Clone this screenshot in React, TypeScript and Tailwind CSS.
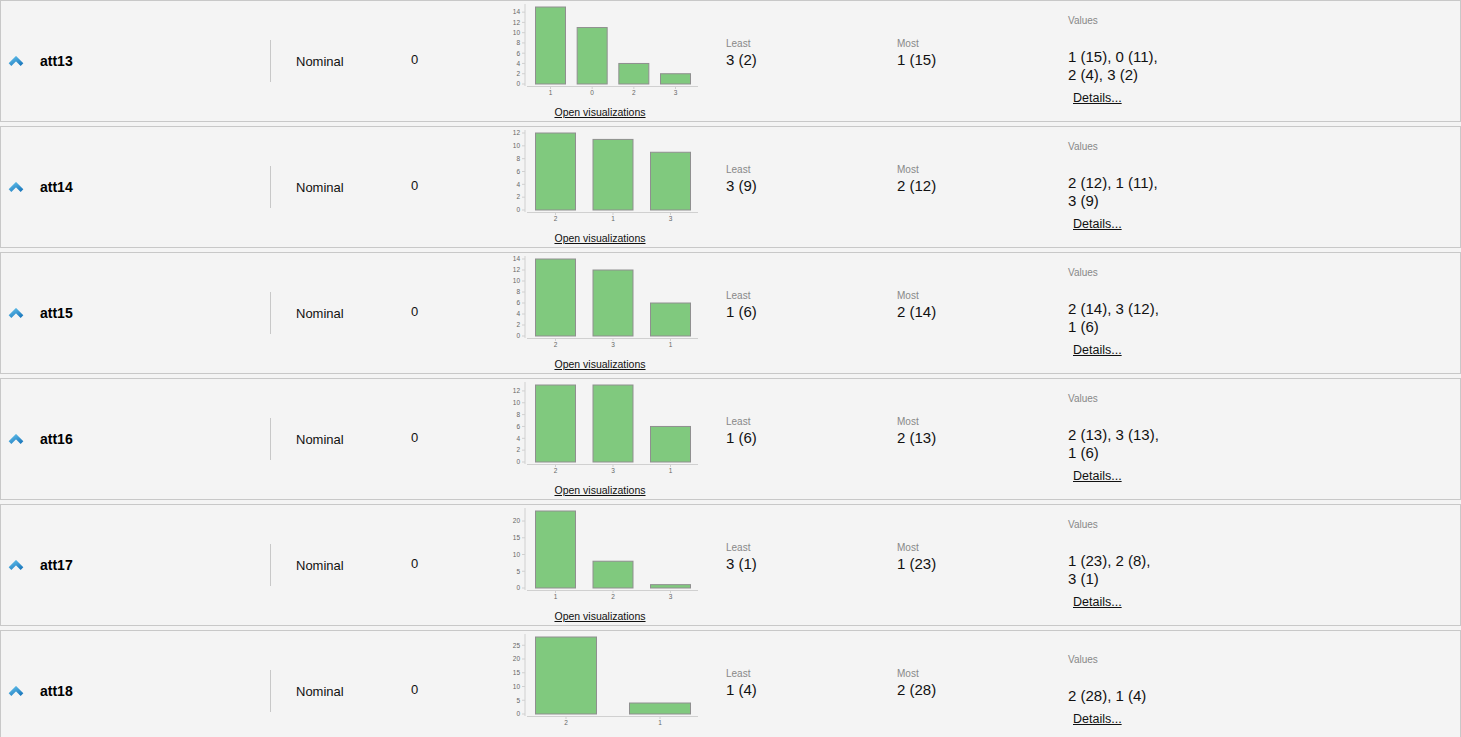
import React from 'react';

interface AttrRow {
  name: string;
  least: string;
  most: string;
  values: string[];
  bars: [string, number][];
  ticks: number[];
}

const rows: AttrRow[] = [
  { name: 'att13', least: '3 (2)', most: '1 (15)', values: ['1 (15), 0 (11),', '2 (4), 3 (2)'], bars: [['1', 15], ['0', 11], ['2', 4], ['3', 2]], ticks: [0, 2, 4, 6, 8, 10, 12, 14] },
  { name: 'att14', least: '3 (9)', most: '2 (12)', values: ['2 (12), 1 (11),', '3 (9)'], bars: [['2', 12], ['1', 11], ['3', 9]], ticks: [0, 2, 4, 6, 8, 10, 12] },
  { name: 'att15', least: '1 (6)', most: '2 (14)', values: ['2 (14), 3 (12),', '1 (6)'], bars: [['2', 14], ['3', 12], ['1', 6]], ticks: [0, 2, 4, 6, 8, 10, 12, 14] },
  { name: 'att16', least: '1 (6)', most: '2 (13)', values: ['2 (13), 3 (13),', '1 (6)'], bars: [['2', 13], ['3', 13], ['1', 6]], ticks: [0, 2, 4, 6, 8, 10, 12] },
  { name: 'att17', least: '3 (1)', most: '1 (23)', values: ['1 (23), 2 (8),', '3 (1)'], bars: [['1', 23], ['2', 8], ['3', 1]], ticks: [0, 5, 10, 15, 20] },
  { name: 'att18', least: '1 (4)', most: '2 (28)', values: ['2 (28), 1 (4)'], bars: [['2', 28], ['1', 4]], ticks: [0, 5, 10, 15, 20, 25] },
];

// bar widths as the original chart lays them out
const barWidths: Record<number, number> = { 2: 61, 3: 40, 4: 30 };

const Chevron: React.FC<{ id: string }> = ({ id }) => (
  <svg width="16" height="11" viewBox="0 0 16 11">
    <defs>
      <linearGradient id={id} x1="0" y1="0" x2="1" y2="1">
        <stop offset="0" stopColor="#5ab8e6" />
        <stop offset="1" stopColor="#1b78bd" />
      </linearGradient>
    </defs>
    <polyline points="2,8.6 8,2.6 14,8.6" fill="none" stroke={`url(#${id})`} strokeWidth="3.8" />
  </svg>
);

const BarChart: React.FC<{ bars: [string, number][]; ticks: number[] }> = ({ bars, ticks }) => {
  const max = Math.max(...bars.map(b => b[1]));
  const base = 83;
  const top = 6;
  const scale = (v: number) => base - (v * (base - top)) / max;
  const n = bars.length;
  const bw = barWidths[n] ?? 30;
  const gap = n > 1 ? (155 - n * bw) / (n - 1) : 0;
  return (
    <svg width="200" height="98" viewBox="0 0 200 98" style={{ fontFamily: '"Liberation Sans", Arial, sans-serif' }}>
      <line x1="25" y1="3" x2="25" y2="85" stroke="#d0d0d0" strokeWidth="1" />
      <line x1="27" y1="85.5" x2="198" y2="85.5" stroke="#d0d0d0" strokeWidth="1" />
      {ticks.map(t => (
        <g key={t}>
          <line x1="22" x2="25" y1={scale(t)} y2={scale(t)} stroke="#d0d0d0" />
          <text x="20" y={scale(t) + 2.3} textAnchor="end" fontSize="6.5" fill="#666">{t}</text>
        </g>
      ))}
      {bars.map(([label, v], i) => {
        const x = 35.5 + i * (bw + gap);
        const y = scale(v);
        return (
          <g key={label}>
            <rect x={x} y={y} width={bw} height={base - y} fill="#80c97e" stroke="#8f8f8f" strokeWidth="1" />
            <line x1={x + bw / 2} x2={x + bw / 2} y1="86" y2="88" stroke="#d0d0d0" />
            <text x={x + bw / 2} y="93.5" textAnchor="middle" fontSize="6.5" fill="#666">{label}</text>
          </g>
        );
      })}
    </svg>
  );
};

const Row: React.FC<{ row: AttrRow; idx: number }> = ({ row, idx }) => (
  <div className="flex h-[122px] mb-[4px] border border-[#c8c8c8] bg-[#f4f4f4] text-[#111]">
    <div className="w-[269px] flex items-center pl-[7px]">
      <Chevron id={`chev-${idx}`} />
      <span className="ml-[16px] text-[14px] font-bold text-black pt-[1px]">{row.name}</span>
    </div>
    <div className="w-px h-[42px] self-center bg-[#c8c8c8]" />
    <div className="w-[140px] flex items-center pl-[25px] text-[13px] pt-[1px]">Nominal</div>
    <div className="w-[89px] flex items-center text-[13px] pb-[3px]">0</div>
    <div className="w-[200px] flex flex-col items-center">
      <BarChart bars={row.bars} ticks={row.ticks} />
      <a href="#" className="mt-[7px] text-[10.5px] leading-[12px] underline text-[#111]">Open visualizations</a>
    </div>
    <div className="w-[197px] pl-[26px] pt-[37px] flex flex-col">
      <span className="text-[10px] leading-[12px] text-[#888]">Least</span>
      <span className="text-[15px] leading-[18px] mt-[1px]">{row.least}</span>
    </div>
    <div className="w-[171px] pt-[37px] flex flex-col">
      <span className="text-[10px] leading-[12px] text-[#888]">Most</span>
      <span className="text-[15px] leading-[18px] mt-[1px]">{row.most}</span>
    </div>
    <div className="flex flex-col self-center pb-[1px]">
      <span className="text-[10px] leading-[12px] text-[#888]">Values</span>
      <div className="mt-[21px] text-[15px] leading-[18px]">
        {row.values.map(v => (
          <div key={v}>{v}</div>
        ))}
      </div>
      <a href="#" className="ml-[5px] mt-[6px] text-[12.5px] leading-[16px] underline text-[#111]">Details...</a>
    </div>
  </div>
);

export default function App() {
  return (
    <div className="min-h-screen bg-[#f4f4f4]" style={{ fontFamily: '"Liberation Sans", Arial, sans-serif' }}>
      {rows.map((r, i) => (
        <Row key={r.name} row={r} idx={i} />
      ))}
    </div>
  );
}
